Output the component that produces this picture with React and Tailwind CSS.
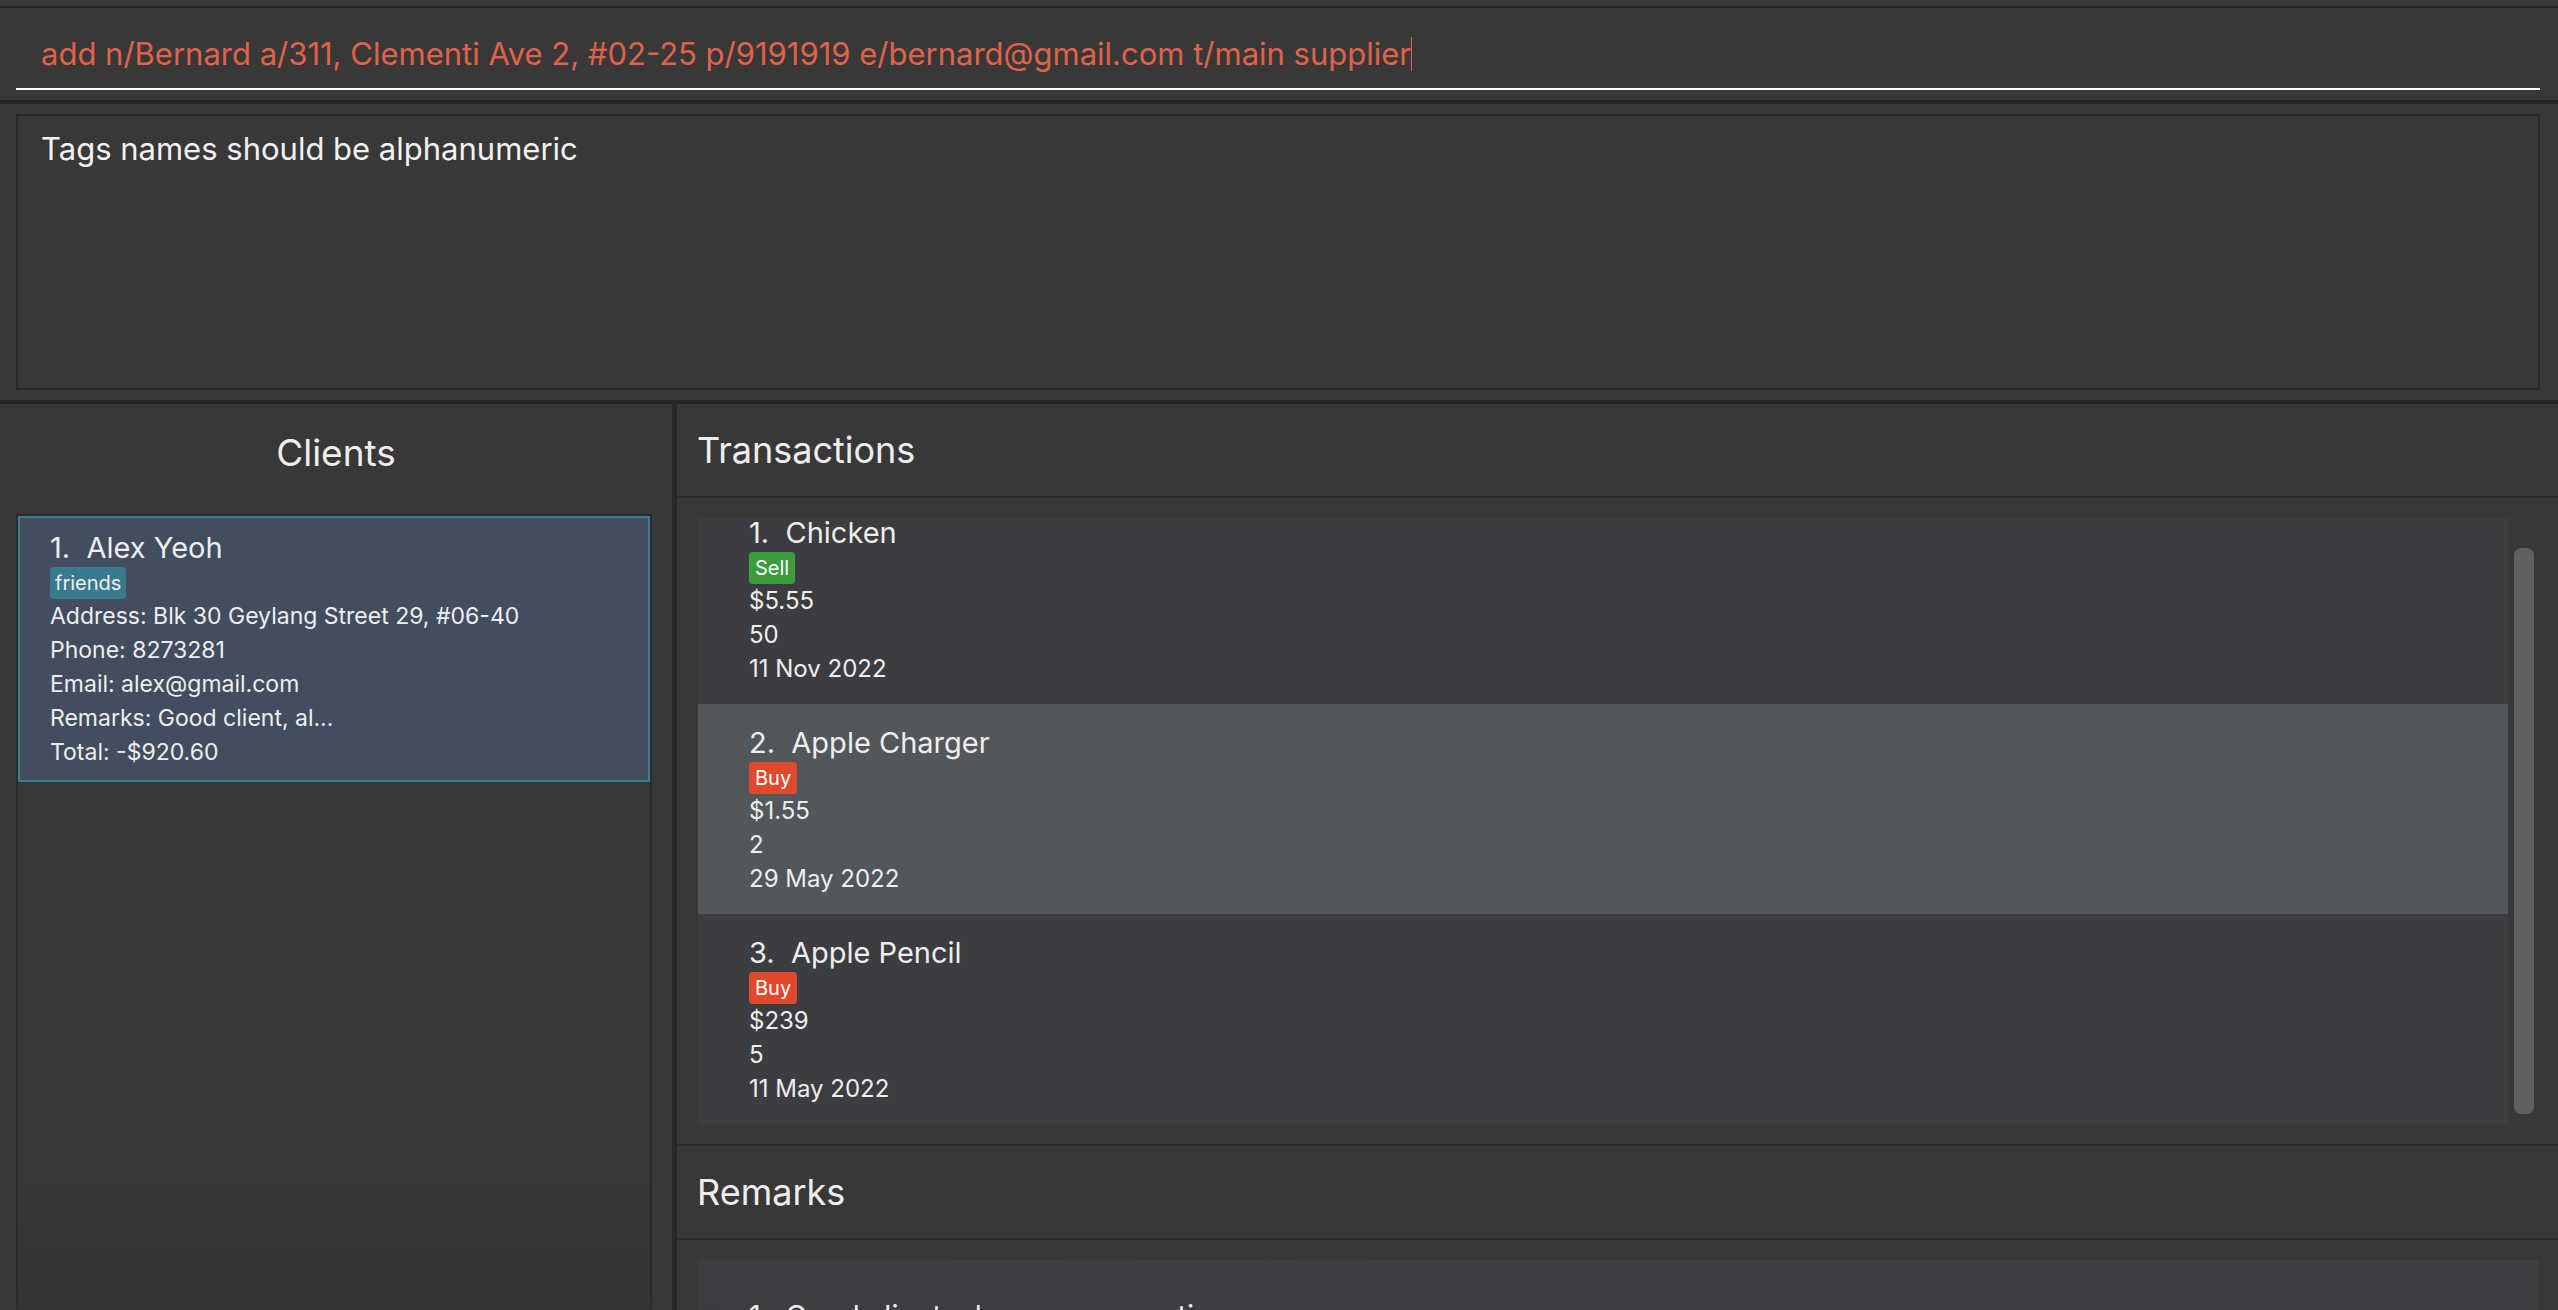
import React from 'react';

const transactions = [
  { id: 1, name: 'Chicken', type: 'Sell', price: '$5.55', qty: '50', date: '11 Nov 2022' },
  { id: 2, name: 'Apple Charger', type: 'Buy', price: '$1.55', qty: '2', date: '29 May 2022', selected: true },
  { id: 3, name: 'Apple Pencil', type: 'Buy', price: '$239', qty: '5', date: '11 May 2022' },
];

const client = {
  name: 'Alex Yeoh',
  tags: ['friends'],
  lines: [
    'Address: Blk 30 Geylang Street 29, #06-40',
    'Phone: 8273281',
    'Email: alex@gmail.com',
    'Remarks: Good client, al...',
    'Total: -$920.60',
  ],
};

const TransactionCard = ({ tx }) => (
  <div
    className={`${tx.selected ? 'bg-[#51575b]' : 'bg-[#3c3d40]'} h-[210px] shrink-0 pl-[51px] pt-[20px] pb-[18px] text-[#eeeeee]`}
  >
    <div className="text-[29px] leading-[38px] whitespace-pre">{`${tx.id}.  ${tx.name}`}</div>
    <div>
      <span
        className={`${tx.type === 'Buy' ? 'bg-[#e0492b]' : 'bg-[#3a9c3a]'} inline-block h-[32px] px-[6px] rounded-[4px] text-[20px] leading-[32px] text-white`}
      >
        {tx.type}
      </span>
    </div>
    <div className="text-[24px] leading-[34px]">{tx.price}</div>
    <div className="text-[24px] leading-[34px]">{tx.qty}</div>
    <div className="text-[24px] leading-[34px]">{tx.date}</div>
  </div>
);

const App = () => {
  return (
    <div
      className="w-[2558px] h-[1310px] overflow-hidden bg-[#383838] flex flex-col text-[#eeeeee]"
      style={{ fontFamily: 'Inter, "Noto Sans", sans-serif' }}
    >
      {/* Command box */}
      <div className="mt-[6px] shrink-0 border-t-2 border-[#262626] h-[94px] pb-[10px] pl-[16px] pr-[18px]">
        <div className="border-b-2 border-white pt-[26px] pb-[14px] pl-[25px]">
          <div className="text-[31px] leading-[40px] text-[#e0624a] whitespace-pre flex items-center">
            <span>add n/Bernard a/311, Clementi Ave 2, #02-25 p/9191919 e/bernard@gmail.com t/main supplier</span>
            <span className="inline-block w-[1px] h-[34px] bg-[#e0624a]"></span>
          </div>
        </div>
      </div>

      {/* Result box */}
      <div className="shrink-0 border-t-4 border-[#262626] h-[300px] pt-[10px] pb-[10px] pl-[16px] pr-[18px]">
        <div className="h-[276px] border-2 border-[#2a2a2a] pl-[23px] pt-[13px]">
          <div className="text-[31px] leading-[40px] text-[#f2f2f2]">Tags names should be alphanumeric</div>
        </div>
      </div>

      {/* Main panels */}
      <div className="border-t-4 border-[#262626] flex-1 flex min-h-0">
        {/* Clients */}
        <div className="w-[672px] shrink-0 flex flex-col">
          <div className="h-[110px] shrink-0 pt-[25px] text-center text-[37px] leading-[48px]">Clients</div>
          <div className="ml-[16px] w-[636px] flex-1 border-2 border-b-0 border-[#2b2b2b] bg-gradient-to-b from-[#383838] from-80% to-[#333333]">
            <div className="border-2 border-[#3a7d94] bg-[#424d5f] pl-[30px] pt-[11px] pb-[11px]">
              <div className="text-[29px] leading-[38px] whitespace-pre">{`1.  ${client.name}`}</div>
              <div className="flex gap-2">
                {client.tags.map((tag) => (
                  <span
                    key={tag}
                    className="inline-block h-[32px] px-[5px] rounded-[4px] bg-[#3a7a8e] text-[20px] leading-[32px]"
                  >
                    {tag}
                  </span>
                ))}
              </div>
              {client.lines.map((line) => (
                <div key={line} className="text-[23px] leading-[34px]">
                  {line}
                </div>
              ))}
            </div>
          </div>
        </div>

        {/* Divider */}
        <div className="w-[5px] shrink-0 bg-[#262626]"></div>

        {/* Right side */}
        <div className="flex-1 flex flex-col min-w-0 min-h-0">
          <div className="h-[94px] shrink-0 border-b-2 border-[#2a2a2a] pl-[20px] pt-[23px] text-[36px] leading-[46px]">
            Transactions
          </div>

          <div className="h-[648px] shrink-0 border-b-2 border-[#2a2a2a] pl-[21px] pt-[20px] pb-[20px] flex">
            <div className="w-[1810px] h-[606px] overflow-hidden">
              <div className="-mt-[24px] flex flex-col">
                {transactions.map((tx) => (
                  <TransactionCard key={tx.id} tx={tx} />
                ))}
              </div>
            </div>
            <div className="ml-[6px] mt-[30px] w-[20px] h-[566px] rounded-[7px] bg-[#606060]"></div>
          </div>

          <div className="h-[94px] shrink-0 border-b-2 border-[#2a2a2a] pl-[20px] pt-[23px] text-[36px] leading-[46px]">
            Remarks
          </div>

          <div className="flex-1 min-h-0 overflow-hidden pl-[21px] pr-[20px] pt-[20px]">
            <div className="h-[200px] bg-gradient-to-r from-[#3c3d40] to-[#3e3f42] pl-[51px] pt-[37px]">
              <div className="text-[29px] leading-[38px] whitespace-pre">1.  Good client, always pays on time</div>
            </div>
          </div>
        </div>
      </div>
    </div>
  );
};

export default App;
